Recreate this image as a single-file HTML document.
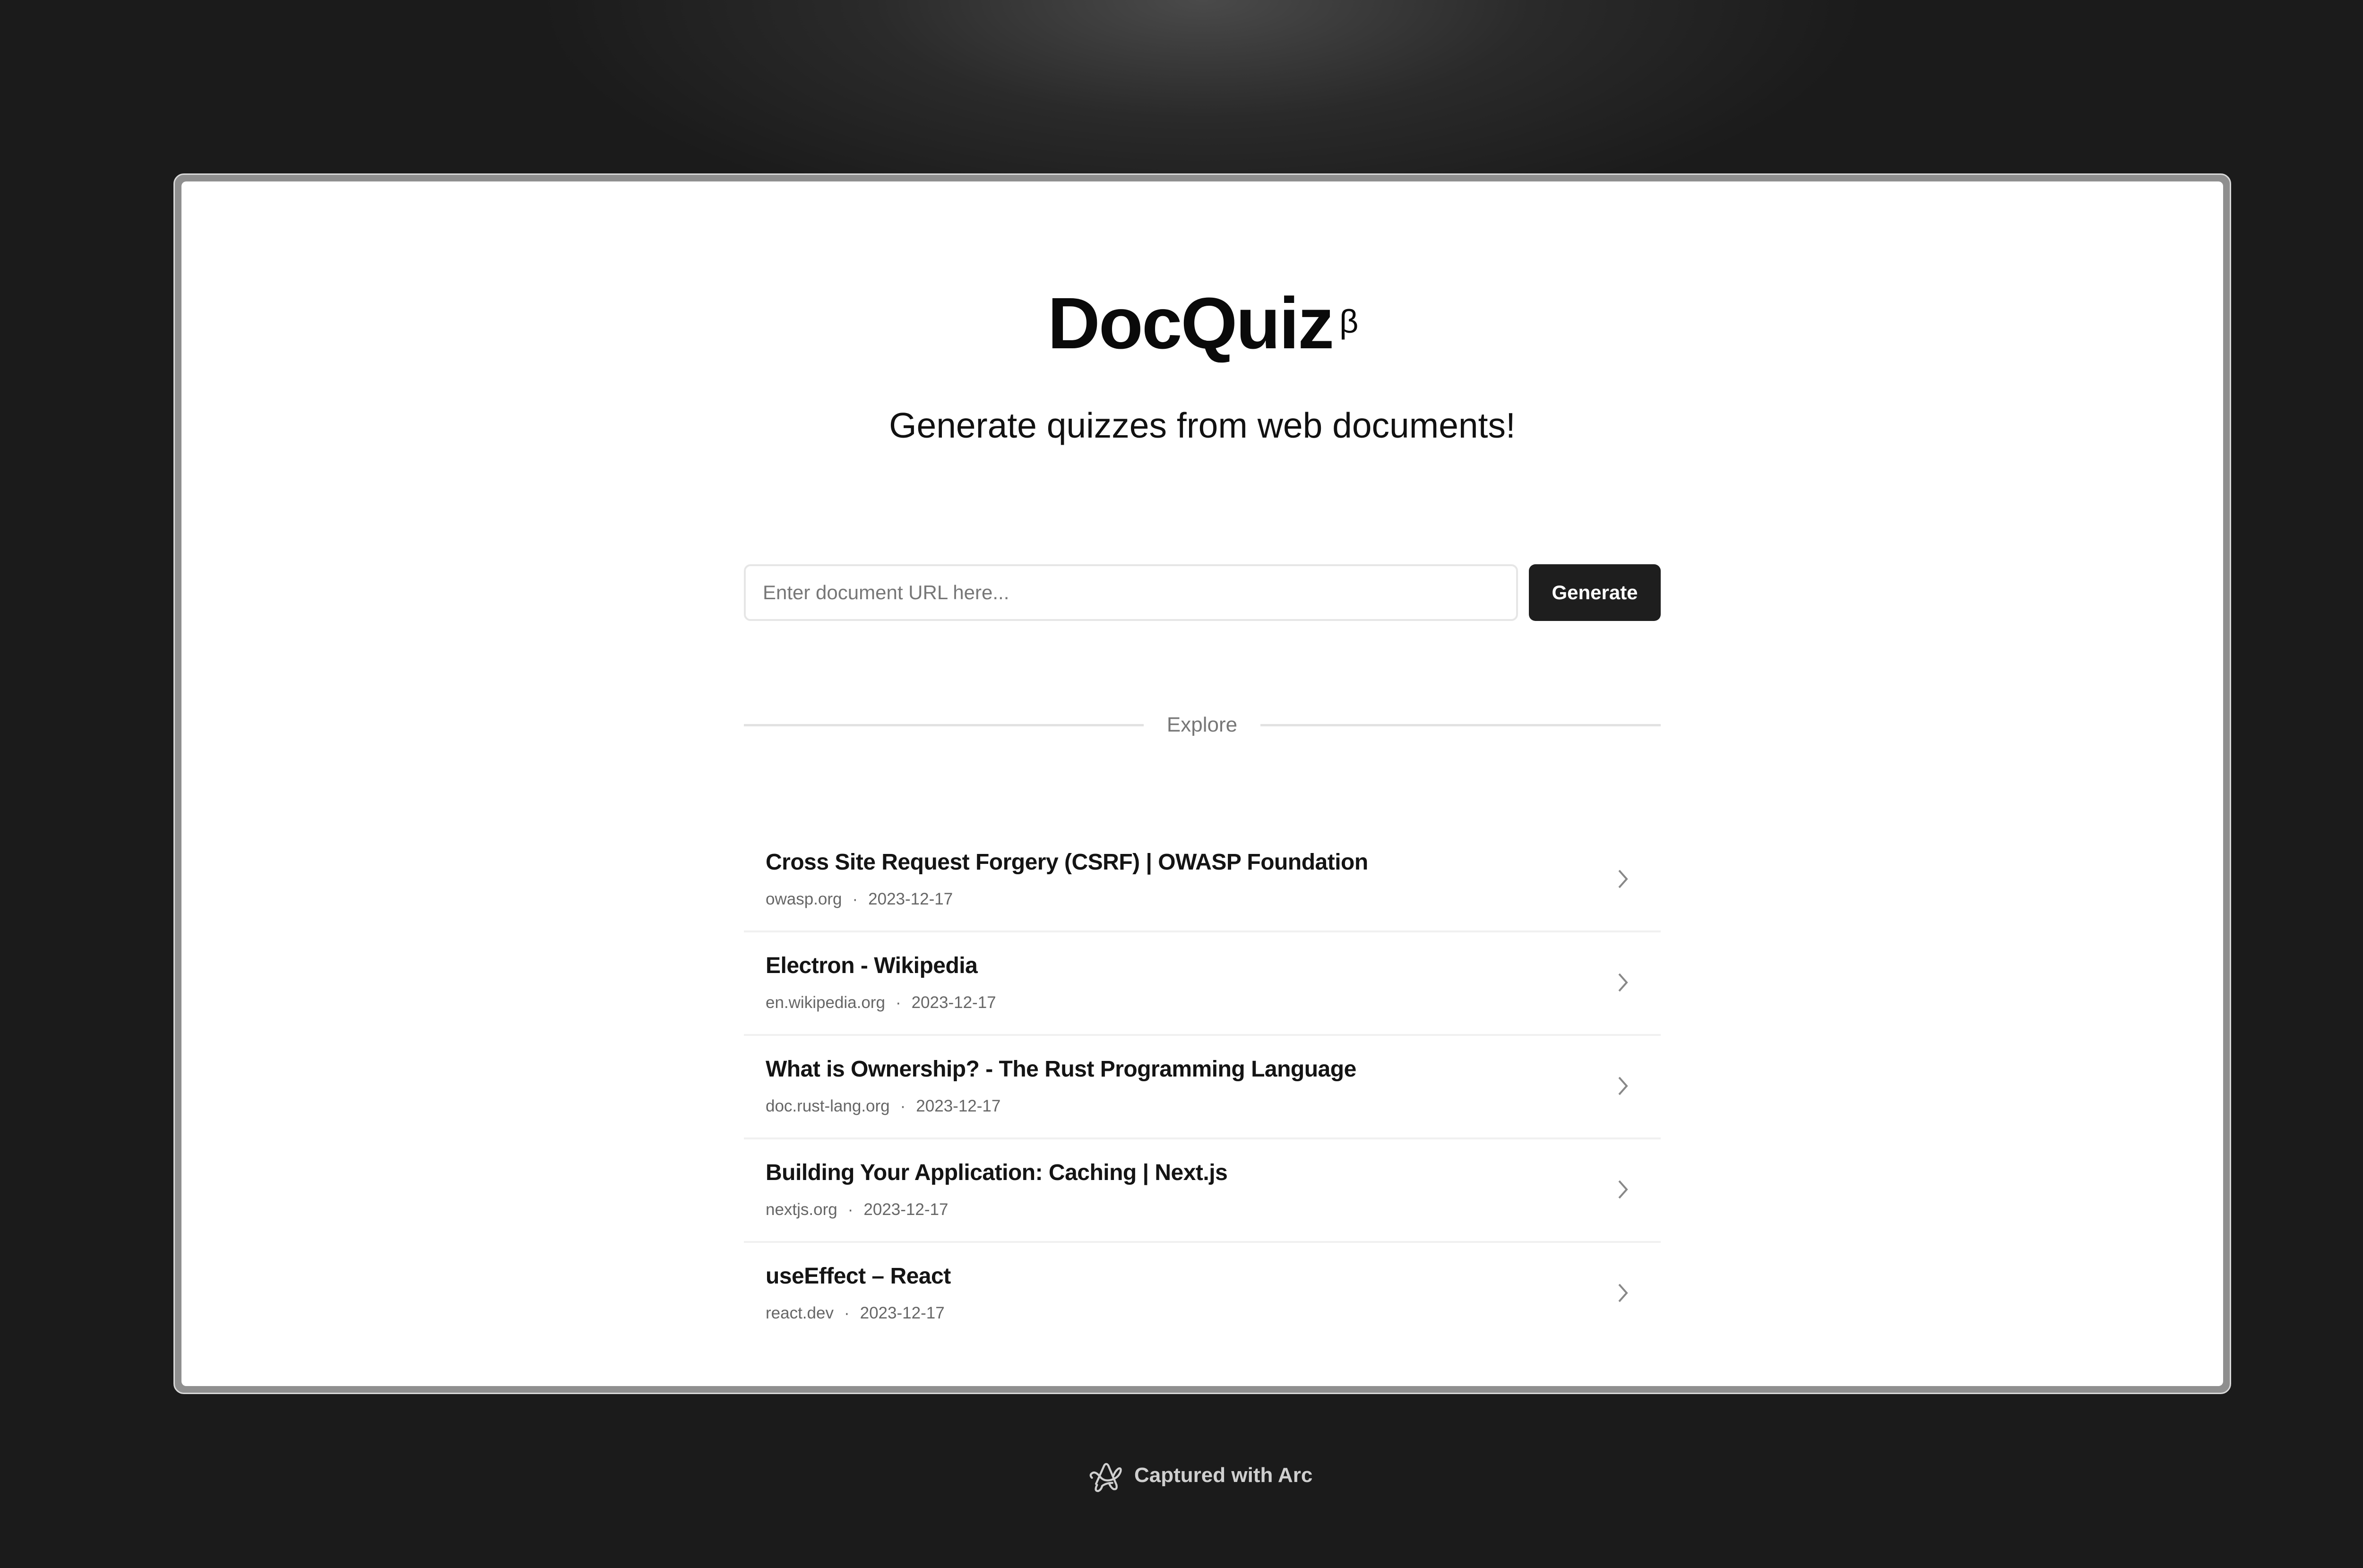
<!DOCTYPE html>
<html><head><meta charset="utf-8">
<style>
*{margin:0;padding:0;box-sizing:border-box}
html,body{width:5088px;height:3318px;overflow:hidden}
body{background:#1b1b1b;font-family:"Liberation Sans",sans-serif;position:relative}
.glow{position:absolute;left:0;top:0;width:5088px;height:3318px;background:radial-gradient(ellipse 1400px 500px at 2544px 0px,#4a4a4a 0%,#2a2a2a 50%,rgba(27,27,27,0) 100%)}
.win{position:absolute;left:367px;top:367px;width:4354px;height:2583px;background:#8f8f8f;border-radius:22px;border:3px solid #d9d9d9}
.inner{position:absolute;left:14px;top:14px;right:14px;bottom:14px;background:#fff;border-radius:10px;overflow:hidden}
.abs{position:absolute;white-space:nowrap}
.title{left:0;width:100%;text-align:center;top:606px;font-size:154px;line-height:156px;font-weight:700;color:#0a0a0a;letter-spacing:-3px}
.title sup{font-size:70px;font-weight:400;vertical-align:top;position:relative;top:-4px;margin-left:14px}
.sub{left:0;width:100%;text-align:center;top:862px;font-size:75px;line-height:76px;color:#111}
.input{left:1574px;top:1194px;width:1638px;height:120px;border:4px solid #e6e6e6;border-radius:14px;font-size:42px;color:#777;padding-left:36px;line-height:112px}
.btn{left:3235px;top:1194px;width:279px;height:120px;background:#1e1e1e;border-radius:14px;color:#fff;font-weight:700;font-size:42px;line-height:120px;text-align:center}
.line{height:5px;background:#e2e2e2;top:1532px}
.explore{left:2420px;width:247px;text-align:center;top:1512px;font-size:44px;line-height:44px;color:#777}
.row{left:1574px;width:1940px;height:219px;border-bottom:4px solid #f0f0f0}
.row .t{position:absolute;left:46px;top:46px;font-size:48px;line-height:50px;font-weight:700;color:#141414;letter-spacing:-0.5px;white-space:nowrap}
.row .m{position:absolute;left:46px;top:131px;font-size:35px;line-height:35px;color:#666;white-space:nowrap}
.row .m span{margin:0 22px}
.row svg{position:absolute;left:1848px;top:84px}
.foot{left:2400px;top:3100px;font-size:44px;line-height:44px;color:#cfcfcf;font-weight:700}
</style></head><body>
<div class="glow"></div>
<div class="win"><div class="inner">
</div></div>
<div class="abs title">DocQuiz<sup>β</sup></div>
<div class="abs sub">Generate quizzes from web documents!</div>
<div class="abs input">Enter document URL here...</div>
<div class="abs btn">Generate</div>
<div class="abs line" style="left:1574px;width:846px"></div>
<div class="abs line" style="left:2667px;width:847px"></div>
<div class="abs explore">Explore</div>

<div class="abs row" style="top:1754px"><div class="t">Cross Site Request Forgery (CSRF) | OWASP Foundation</div><div class="m">owasp.org<span>·</span>2023-12-17</div><svg width="24" height="44" viewBox="0 0 24 44"><path d="M4 4 L20 22 L4 40" fill="none" stroke="#888" stroke-width="4"/></svg></div>
<div class="abs row" style="top:1973px"><div class="t">Electron - Wikipedia</div><div class="m">en.wikipedia.org<span>·</span>2023-12-17</div><svg width="24" height="44" viewBox="0 0 24 44"><path d="M4 4 L20 22 L4 40" fill="none" stroke="#888" stroke-width="4"/></svg></div>
<div class="abs row" style="top:2192px"><div class="t">What is Ownership? - The Rust Programming Language</div><div class="m">doc.rust-lang.org<span>·</span>2023-12-17</div><svg width="24" height="44" viewBox="0 0 24 44"><path d="M4 4 L20 22 L4 40" fill="none" stroke="#888" stroke-width="4"/></svg></div>
<div class="abs row" style="top:2411px"><div class="t">Building Your Application: Caching | Next.js</div><div class="m">nextjs.org<span>·</span>2023-12-17</div><svg width="24" height="44" viewBox="0 0 24 44"><path d="M4 4 L20 22 L4 40" fill="none" stroke="#888" stroke-width="4"/></svg></div>
<div class="abs row" style="top:2630px;border-bottom:none"><div class="t">useEffect – React</div><div class="m">react.dev<span>·</span>2023-12-17</div><svg width="24" height="44" viewBox="0 0 24 44"><path d="M4 4 L20 22 L4 40" fill="none" stroke="#888" stroke-width="4"/></svg></div>

<svg class="abs" style="left:2304px;top:3092px" width="80" height="68" viewBox="0 0 74 62"><g fill="none" stroke="#cfcfcf" stroke-width="4" stroke-linejoin="round" stroke-linecap="round"><path d="M14 44 L30 8 Q34 2 38 8 L54 46 Q56 56 48 54 Q44 52 40 44"/><path d="M6 32 Q0 26 8 22 Q14 20 22 30 Q30 40 44 36 Q58 32 62 20 Q64 12 58 14 Q52 18 48 28"/><path d="M16 46 Q10 58 18 58 Q24 56 26 48 Q34 42 46 42"/></g></svg>
<div class="abs foot">Captured with Arc</div>
</body></html>
